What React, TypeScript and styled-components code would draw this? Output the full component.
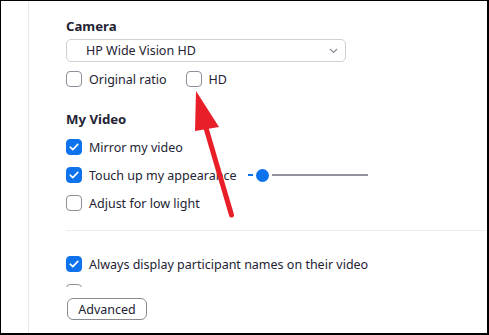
import React from 'react';
import styled, { createGlobalStyle } from 'styled-components';

const GlobalStyle = createGlobalStyle`
  html, body {
    margin: 0;
    padding: 0;
    background: #ffffff;
  }
  * {
    box-sizing: border-box;
  }
`;

const Frame = styled.div`
  position: relative;
  width: 489px;
  height: 335px;
  border-style: solid;
  border-color: #000;
  border-width: 1px 2px 2px 1px;
  display: flex;
  overflow: hidden;
  font-family: 'Noto Sans', 'Open Sans', sans-serif;
  color: #232333;
`;

const SideStrip = styled.div`
  width: 28px;
  flex: 0 0 28px;
  border-right: 1px solid #e6e9f1;
`;

const Main = styled.div`
  flex: 1;
  display: flex;
  flex-direction: column;
`;

const ScrollArea = styled.div`
  height: 286px;
  overflow: hidden;
  padding: 15px 0 0 37px;
`;

const Heading = styled.div<{ gap?: number }>`
  height: 20px;
  line-height: 20px;
  font-size: 13.2px;
  font-weight: 700;
  margin-top: ${({ gap }) => gap ?? 0}px;
`;

const Select = styled.div`
  margin-top: 3px;
  width: 280px;
  height: 23px;
  border: 1px solid #cfcfd6;
  border-radius: 5px;
  display: flex;
  align-items: center;
  justify-content: space-between;
  padding: 0 7px 0 19px;
  font-size: 12.5px;
`;

const Row = styled.div<{ gap?: number }>`
  height: 28px;
  display: flex;
  align-items: center;
  font-size: 12.5px;
  margin-top: ${({ gap }) => gap ?? 0}px;
`;

const Option = styled.label<{ spaced?: boolean }>`
  display: flex;
  align-items: center;
  gap: 7px;
  margin-right: ${({ spaced }) => (spaced ? 19 : 0)}px;
`;

const Box = styled.span<{ checked?: boolean }>`
  width: 16px;
  height: 16px;
  border-radius: 4px;
  display: flex;
  align-items: center;
  justify-content: center;
  border: 1px solid ${({ checked }) => (checked ? '#0e72ed' : '#8e8e98')};
  background: ${({ checked }) => (checked ? '#0e72ed' : '#fff')};
`;

const Slider = styled.div`
  margin-left: 12px;
  width: 120px;
  height: 14px;
  display: flex;
  align-items: center;
`;

const FilledTrack = styled.div`
  width: 5px;
  height: 2px;
  background: #0e72ed;
`;

const Knob = styled.div`
  width: 13px;
  height: 13px;
  border-radius: 50%;
  background: #0e72ed;
  margin: 0 3px 0 3px;
`;

const Track = styled.div`
  flex: 1;
  height: 2px;
  background: #94929c;
`;

const Divider = styled.div`
  margin-top: 13px;
  height: 1px;
  background: #ebedf3;
`;

const Footer = styled.div`
  padding: 11px 0 0 38px;
`;

const Button = styled.button`
  width: 80px;
  height: 22px;
  border: 1px solid #8a8a93;
  border-radius: 6px;
  background: #fff;
  font-family: inherit;
  font-size: 12.5px;
  color: #232333;
  padding: 0;
  display: flex;
  align-items: center;
  justify-content: center;
`;

const Annotation = styled.svg`
  position: absolute;
  left: 0;
  top: 0;
  pointer-events: none;
`;

const Check = () => (
  <svg width="10" height="8" viewBox="0 0 10 8">
    <path d="M1.2 4.2 L3.8 6.6 L8.8 1.4" fill="none" stroke="#fff" strokeWidth="1.6" strokeLinecap="round" strokeLinejoin="round" />
  </svg>
);

const CheckItem = ({ label, checked, spaced }: { label?: string; checked?: boolean; spaced?: boolean }) => (
  <Option spaced={spaced}>
    <Box checked={checked}>{checked && <Check />}</Box>
    {label && <span>{label}</span>}
  </Option>
);

const App = () => {
  return (
    <>
      <GlobalStyle />
      <Frame>
        <SideStrip />
        <Main>
          <ScrollArea>
            <Heading>Camera</Heading>
            <Select>
              <span>HP Wide Vision HD</span>
              <svg width="9" height="6" viewBox="0 0 9 6">
                <path d="M1 1 L4.5 4.5 L8 1" fill="none" stroke="#8c8c96" strokeWidth="1.2" />
              </svg>
            </Select>
            <Row gap={3}>
              <CheckItem label="Original ratio" spaced />
              <CheckItem label="HD" />
            </Row>
            <Heading gap={16}>My Video</Heading>
            <Row gap={4}>
              <CheckItem label="Mirror my video" checked />
            </Row>
            <Row>
              <CheckItem label="Touch up my appearance" checked />
              <Slider>
                <FilledTrack />
                <Knob />
                <Track />
              </Slider>
            </Row>
            <Row>
              <CheckItem label="Adjust for low light" />
            </Row>
            <Divider />
            <Row gap={19}>
              <CheckItem label="Always display participant names on their video" checked />
            </Row>
            <Row>
              <CheckItem />
            </Row>
          </ScrollArea>
          <Footer>
            <Button>Advanced</Button>
          </Footer>
        </Main>
        <Annotation width="489" height="335" viewBox="0 0 489 335">
          <path d="M205 127 L230.5 214" stroke="#e81f28" strokeWidth="5" strokeLinecap="round" />
          <polygon points="195,90 194,130 218,126" fill="#e81f28" />
        </Annotation>
      </Frame>
    </>
  );
};

export default App;
